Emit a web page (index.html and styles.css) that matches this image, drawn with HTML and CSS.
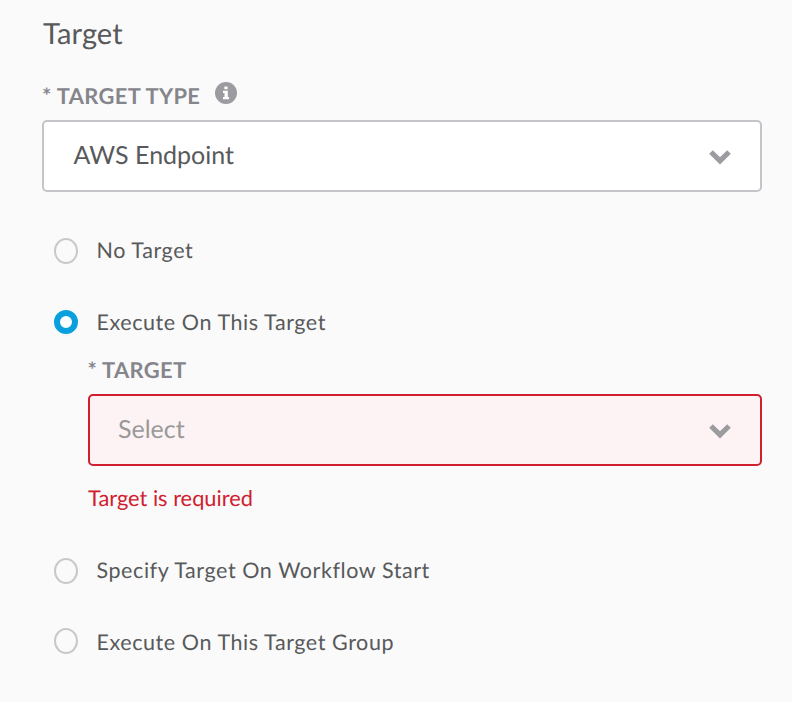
FILE: index.html
```html
<!DOCTYPE html>
<html lang="en">
<head>
<meta charset="utf-8">
<title>Target</title>
<link rel="stylesheet" href="styles.css">
</head>
<body>
<main class="panel">
  <h1 class="title">Target</h1>
  <div class="label type-label"><span>* TARGET TYPE</span>
    <svg class="info" viewBox="0 0 22 22"><circle cx="11" cy="11" r="11" fill="#9b9ba0"/><path fill="#fff" d="M9.4 4.4h3.2v2.8H9.4zM8 8.8h4.8v6.2h1.3v2.3H8V15h1.5v-3.9H8z"/></svg>
  </div>
  <div class="select"><span>AWS Endpoint</span>
    <svg class="chevron" viewBox="0 0 24 16"><path d="M3 3l9 8.9L21 3" fill="none" stroke="#9b9ba0" stroke-width="5.2"/></svg>
  </div>
  <div class="option first"><span class="radio"></span><span>No Target</span></div>
  <div class="option second"><span class="radio checked"></span><span>Execute On This Target</span></div>
  <div class="nested">
    <div class="label"><span>* TARGET</span></div>
    <div class="select invalid"><span>Select</span>
      <svg class="chevron" viewBox="0 0 24 16"><path d="M3 3l9 8.9L21 3" fill="none" stroke="#9b9ba0" stroke-width="5.2"/></svg>
    </div>
    <p class="error">Target is required</p>
  </div>
  <div class="option third"><span class="radio"></span><span>Specify Target On Workflow Start</span></div>
  <div class="option fourth"><span class="radio"></span><span>Execute On This Target Group</span></div>
</main>
</body>
</html>
```
FILE: styles.css
```css
* { box-sizing: border-box; }
body { margin: 0; background: #fafafa; color: #58595b; font-family: Lato, sans-serif; text-rendering: geometricPrecision; }
.panel { width: 792px; height: 702px; padding: 16px 30px 0 42px; overflow: hidden; }
.title { margin: 0; height: 36px; padding-left: 1px; font-size: 29.1px; line-height: 36px; font-weight: 400; letter-spacing: .1px; }
.label { display: flex; height: 28px; line-height: 28px; font-size: 21.9px; font-weight: 700; color: #85858c; letter-spacing: .35px; }
.label span { margin-left: -.6px; }
.type-label { margin-top: 30px; margin-bottom: 10px; }
.type-label span { width: 158.6px; padding-left: .7px; white-space: nowrap; }
.info { width: 22px; height: 22px; margin-left: 15px; }
.select { display: flex; align-items: center; justify-content: space-between; height: 72px; padding: 0 28.5px 4px 29.5px; border: 2px solid #c4c4c9; border-radius: 5px; background: #fff; font-size: 25px; }
.select span { margin-top: 2px; }
.chevron { width: 24px; height: 16px; margin-top: 6px; }
.option { display: flex; align-items: center; height: 28px; padding-left: 12px; line-height: 26px; font-size: 21.5px; letter-spacing: .57px; }
.option > span:last-child { margin-top: -2px; margin-left: -.5px; }
.radio { flex: none; width: 24px; height: 26px; margin-right: 19px; border: 2px solid #c8c8c8; border-radius: 50%; }
.checked { height: 24px; margin-top: -2px; border: 6px solid #0a9fdd; background: #fff; }
.first { margin-top: 45px; }
.second { margin-top: 44px; }
.nested { padding-left: 46px; margin-top: 19px; }
.nested .select { margin-top: 10px; padding-left: 28px; }
.select.invalid { border-color: #d0202f; background: #fdf3f4; color: #999; }
.error { margin: 18px 0 0; height: 28px; line-height: 28px; color: #d0202f; font-size: 21.8px; }
.third { margin-top: 45px; }
.fourth { margin-top: 44px; }
.fourth .radio { margin-top: -4px; }
```
